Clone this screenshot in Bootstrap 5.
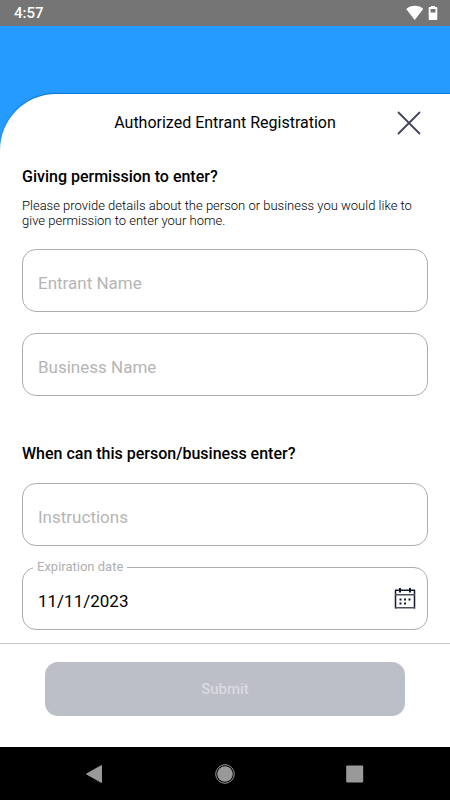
<!DOCTYPE html>
<html lang="en">
<head>
<meta charset="utf-8">
<meta name="viewport" content="width=device-width, initial-scale=1">
<title>Authorized Entrant Registration</title>
<link href="https://cdn.jsdelivr.net/npm/bootstrap@5.3.0/dist/css/bootstrap.min.css" rel="stylesheet">
<style>
body { font-family: Roboto, "Liberation Sans", sans-serif; font-size: 16px; line-height: 20px; color: #000; background: #259aff; }
.status-bar { background: #757575; height: 26px; padding: 0 12px 0 14px; font-size: 15px; font-weight: 500; }
.sheet { margin-top: 68px; border-top-left-radius: 56px; box-shadow: 0 -1px 1px #0878d8; }
.sheet-head { display: grid; grid-template-columns: 56px 1fr 56px; height: 58px; padding: 0 13px; }
.sheet-title { font-size: 16px; line-height: 20px; font-weight: 400; }
.form-body { padding: 15px 22px 13px; }
.section-title { font-size: 16px; line-height: 20px; font-weight: 500; }
.intro { font-size: 13px; line-height: 15px; font-weight: 300; margin: 11px 0 21px; }
.field { height: 63px; border: 1px solid #adadad; border-radius: 14px; padding: 4px 15px 0; font-size: 17px; color: #000; background: #fff; }
.field::placeholder { color: #b5b5b5; opacity: 1; }
.fields { gap: 21px; }
.second-title { margin: 48px 0 19px; }
.field-date { padding-right: 48px; }
.float-label { position: absolute; top: -8px; left: 11px; padding: 0 4px; background: #fff; font-size: 13px; line-height: 16px; color: #b0b0b0; }
.date-btn { position: absolute; top: 20px; right: 12px; }
.action-bar { border-top: 1px solid #c9c9c9; padding: 18px 45px 31px; }
.submit-btn, .submit-btn:disabled { height: 54px; border: 0; border-radius: 13px; background: #bcbfc8; color: #d9dae0; font-size: 15px; font-weight: 500; opacity: 1; }
.system-nav { height: 53px; background: #000; padding: 0 81px; }
</style>
<script src="https://cdn.jsdelivr.net/npm/bootstrap@5.3.0/dist/js/bootstrap.bundle.min.js" defer></script>
</head>
<body class="d-flex flex-column min-vh-100">
<div class="status-bar d-flex align-items-center justify-content-between text-white">
  <span>4:57</span>
  <span class="d-flex align-items-center gap-1">
    <svg width="18" height="16" viewBox="0 0 18 16" fill="#fff" aria-hidden="true"><path d="M.2 4C5-.2 13-.2 17.200 4L8.700 15Z"/></svg>
    <svg width="10" height="16" viewBox="0 0 10 16" aria-hidden="true"><path fill="#fff" fill-rule="evenodd" d="M3 1h4v1h1.500q.8 0 .8.8v11.400q0 .8-.8.8h-7q-.8 0-.8-.8V2.800q0-.8.8-.8H3ZM2.500 4v3.500h5V4Z"/></svg>
  </span>
</div>
<div class="sheet bg-white d-flex flex-column flex-grow-1">
  <header class="sheet-head align-items-center">
    <span></span>
    <h1 class="sheet-title text-center m-0">Authorized Entrant Registration</h1>
    <button type="button" class="btn border-0 p-0 d-flex justify-content-center" aria-label="Close">
      <svg width="24" height="24" viewBox="0 0 24 24" fill="none" stroke="#42445f" stroke-width="1.800" stroke-linecap="round"><path d="M1.500 1.500l21 21M22.500 1.500l-21 21"/></svg>
    </button>
  </header>
  <form class="d-flex flex-column flex-grow-1">
    <main class="form-body flex-grow-1">
      <h2 class="section-title m-0">Giving permission to enter?</h2>
      <p class="intro">Please provide details about the person or business you would like to give permission to enter your home.</p>
      <div class="fields d-flex flex-column">
        <input type="text" class="form-control field" placeholder="Entrant Name" aria-label="Entrant Name">
        <input type="text" class="form-control field" placeholder="Business Name" aria-label="Business Name">
      </div>
      <h2 class="section-title second-title">When can this person/business enter?</h2>
      <div class="fields d-flex flex-column">
        <input type="text" class="form-control field" placeholder="Instructions" aria-label="Instructions">
        <div class="position-relative">
          <input type="text" id="expiration" class="form-control field field-date" value="11/11/2023">
          <label for="expiration" class="float-label">Expiration date</label>
          <button type="button" class="date-btn btn border-0 p-0 d-flex" aria-label="Choose date">
            <svg width="22" height="23" viewBox="0 0 22 23" fill="none" stroke="#15192b"><path stroke-width="1.500" d="M1.500 3v18.500M20.500 3v18.500M1 3.200h20"/><path stroke="#4d5060" stroke-width="1.500" d="M1 7.700h20M1 20.700h20"/><path stroke-width="2" d="M6 1v4.500M16 1v4.500"/><path stroke-width="2" d="M5.500 12.500h2M10 12.500h2M14.500 12.500h2M5.500 16.500h2M10 16.500h2"/></svg>
          </button>
        </div>
      </div>
    </main>
    <div class="action-bar">
      <button type="submit" class="submit-btn btn w-100" disabled>Submit</button>
    </div>
  </form>
</div>
<nav class="system-nav d-flex align-items-center justify-content-between" aria-label="System">
  <button type="button" class="btn border-0 p-0 d-flex" aria-label="Back"><svg width="24" height="24" viewBox="0 0 24 24"><path fill="#999" stroke="#999" stroke-linejoin="round" d="M5.500 12L20.500 3.500v17Z"/></svg></button>
  <button type="button" class="btn border-0 p-0 d-flex" aria-label="Home"><svg width="24" height="24" viewBox="0 0 24 24"><circle cx="12" cy="12" r="9.300" fill="none" stroke="#999"/><circle cx="12" cy="12" r="7.800" fill="#999"/></svg></button>
  <button type="button" class="btn border-0 p-0 d-flex" aria-label="Recent apps"><svg width="24" height="24" viewBox="0 0 24 24"><rect x="1.200" y="3.500" width="17" height="17" rx="1" fill="#999"/></svg></button>
</nav>
</body>
</html>
